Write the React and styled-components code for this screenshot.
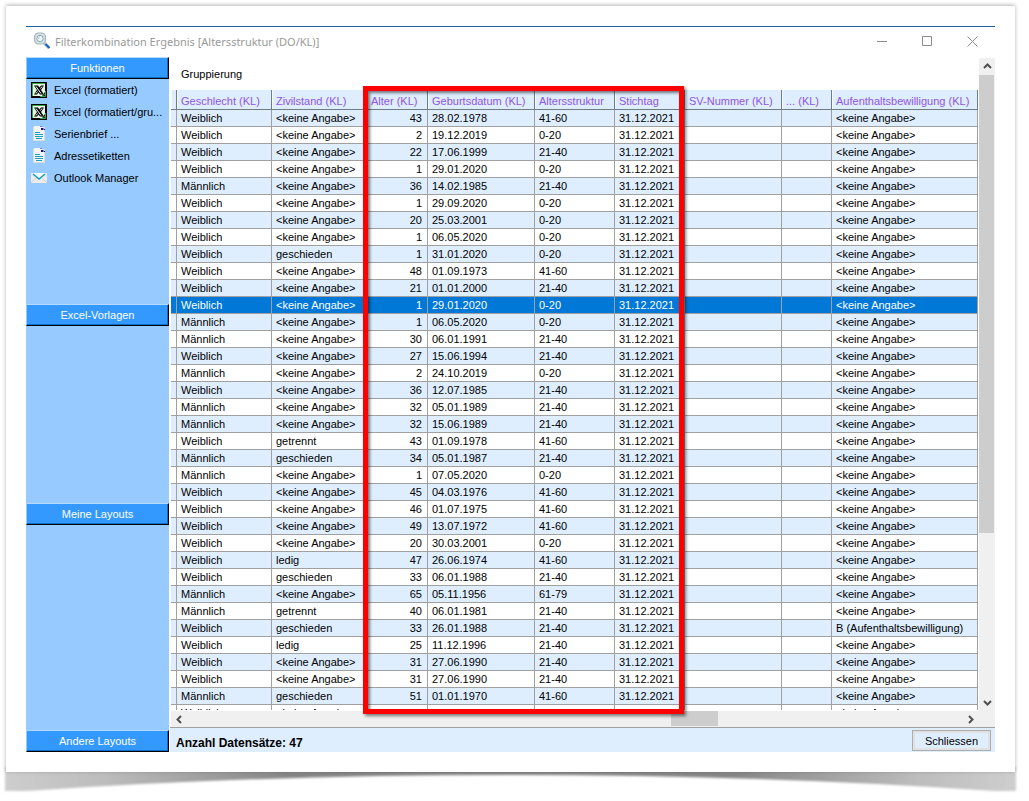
import { useState } from "react";
import styled, { createGlobalStyle } from "styled-components";

const NONE = "<keine Angabe>";
const PERMIT = "B (Aufenthaltsbewilligung)";

const columns = [
  { title: "Geschlecht (KL)", width: 95 },
  { title: "Zivilstand (KL)", width: 95 },
  { title: "Alter (KL)", width: 61 },
  { title: "Geburtsdatum (KL)", width: 107 },
  { title: "Altersstruktur", width: 80 },
  { title: "Stichtag", width: 70 },
  { title: "SV-Nummer (KL)", width: 97 },
  { title: "... (KL)", width: 50 },
  { title: "Aufenthaltsbewilligung (KL)" },
];

//Gender, marital status, age, date of birth, age group, residence permit.
const records = [
  ["Weiblich", NONE, 43, "28.02.1978", "41-60"],
  ["Weiblich", NONE, 2, "19.12.2019", "0-20"],
  ["Weiblich", NONE, 22, "17.06.1999", "21-40"],
  ["Weiblich", NONE, 1, "29.01.2020", "0-20"],
  ["Männlich", NONE, 36, "14.02.1985", "21-40"],
  ["Weiblich", NONE, 1, "29.09.2020", "0-20"],
  ["Weiblich", NONE, 20, "25.03.2001", "0-20"],
  ["Weiblich", NONE, 1, "06.05.2020", "0-20"],
  ["Weiblich", "geschieden", 1, "31.01.2020", "0-20"],
  ["Weiblich", NONE, 48, "01.09.1973", "41-60"],
  ["Weiblich", NONE, 21, "01.01.2000", "21-40"],
  ["Weiblich", NONE, 1, "29.01.2020", "0-20"],
  ["Männlich", NONE, 1, "06.05.2020", "0-20"],
  ["Männlich", NONE, 30, "06.01.1991", "21-40"],
  ["Weiblich", NONE, 27, "15.06.1994", "21-40"],
  ["Männlich", NONE, 2, "24.10.2019", "0-20"],
  ["Weiblich", NONE, 36, "12.07.1985", "21-40"],
  ["Männlich", NONE, 32, "05.01.1989", "21-40"],
  ["Männlich", NONE, 32, "15.06.1989", "21-40"],
  ["Weiblich", "getrennt", 43, "01.09.1978", "41-60"],
  ["Männlich", "geschieden", 34, "05.01.1987", "21-40"],
  ["Männlich", NONE, 1, "07.05.2020", "0-20"],
  ["Weiblich", NONE, 45, "04.03.1976", "41-60"],
  ["Weiblich", NONE, 46, "01.07.1975", "41-60"],
  ["Weiblich", NONE, 49, "13.07.1972", "41-60"],
  ["Weiblich", NONE, 20, "30.03.2001", "0-20"],
  ["Weiblich", "ledig", 47, "26.06.1974", "41-60"],
  ["Weiblich", "geschieden", 33, "06.01.1988", "21-40"],
  ["Männlich", NONE, 65, "05.11.1956", "61-79"],
  ["Männlich", "getrennt", 40, "06.01.1981", "21-40"],
  ["Weiblich", "geschieden", 33, "26.01.1988", "21-40", PERMIT],
  ["Weiblich", "ledig", 25, "11.12.1996", "21-40"],
  ["Weiblich", NONE, 31, "27.06.1990", "21-40"],
  ["Weiblich", NONE, 31, "27.06.1990", "21-40"],
  ["Männlich", "geschieden", 51, "01.01.1970", "41-60"],
  ["Weiblich", NONE, 38, "10.01.1983", "21-40"],
];

const SearchIcon = () => (
  <svg width="18" height="18" viewBox="0 0 18 18" aria-hidden="true">
    <path d="M10.5 10.5l5.500 5.500" stroke="#b5c3cc" strokeWidth="3" />
    <path d="M12.500 12l4 4" stroke="#1f64ad" strokeWidth="2.200" />
    <rect x="1.5" y="1" width="11" height="11" rx="4" fill="#d3e2e6" stroke="#aab6bb" strokeWidth="1.2" />
    <circle cx="7" cy="6.5" r="3.2" fill="#eef5f6" stroke="#8fa9b3" />
    <path d="M5.500 7c0-1 .5-2 1.500-2" stroke="#9cc4d2" fill="none" />
  </svg>
);

const ExcelIcon = () => (
  <svg width="16" height="16" viewBox="0 0 16 16" aria-hidden="true">
    <path fill="#000" d="M0 0h16v16H0z" />
    <path fill="#e8f5e8" d="M2 2h12v8l-3 4H2z" />
    <path fill="none" stroke="#35a83f" d="M1.500 14V1.500H14M14.500 9v5.500H9M11 13.500l3-1" />
    <path fill="#000" d="M3 3.500h4l1.500 2L10 3.500h3L10 8l3 4.500H9L7.500 10.500 6 12.500H3L6 8z" />
    <path fill="none" stroke="#fff" d="M5 4.500l5 7M11 4.500L9.500 6.500M6.500 9.500L5 11.500" />
  </svg>
);

const DocumentIcon = () => (
  <svg width="16" height="16" viewBox="0 0 16 16" aria-hidden="true">
    <path fill="#d5dde3" d="M2 1h12v14H2z" />
    <path fill="#f5f5f4" d="M3 0h7l3 3v11H3z" />
    <path fill="#10109c" d="M9 0l4 4V3l-3-3zM10 0h1v3h3v1h-4z" />
    <path fill="none" stroke="#1ba0c4" d="M4 6.500h5M4 8.500h8M4 10.500h8M5 12.500h6" />
  </svg>
);

const MailIcon = () => (
  <svg width="16" height="16" viewBox="0 0 16 16" aria-hidden="true">
    <path fill="#ececec" d="M0 3h16v10H0z" />
    <path fill="none" stroke="#d3d3d3" d="M0 12.500l5-4M16 12.500l-5-4" />
    <path fill="#fff" d="M2 3h12L8 8z" />
    <path fill="none" stroke="#149cc0" strokeWidth="1.5" d="M2 4l6 5 6-5" />
  </svg>
);

const arrowPaths = {
  up: "M1 6l3.500-3.500L8 6",
  down: "M1 3l3.500 3.500L8 3",
  left: "M6 1L2.500 4.500 6 8",
  right: "M3 1l3.500 3.500L3 8",
};

const Arrow = ({ direction }) => (
  <svg width="9" height="9" viewBox="0 0 9 9" aria-hidden="true">
    <path d={arrowPaths[direction]} fill="none" stroke="#505050" strokeWidth="2" />
  </svg>
);

const functions = [
  { label: "Excel (formatiert)", Icon: ExcelIcon },
  { label: "Excel (formatiert/gru...", Icon: ExcelIcon },
  { label: "Serienbrief ...", Icon: DocumentIcon },
  { label: "Adressetiketten", Icon: DocumentIcon },
  { label: "Outlook Manager", Icon: MailIcon },
];

const PageShadow = () => (
  <ShadowArt viewBox="0 0 1010 40" preserveAspectRatio="none" aria-hidden="true">
    <defs>
      <linearGradient id="curl">
        <stop offset="0" stopColor="#cecece" />
        <stop offset="0.1" stopColor="#bcbcbc" />
        <stop offset="0.28" stopColor="#868686" />
        <stop offset="0.72" stopColor="#868686" />
        <stop offset="0.9" stopColor="#bcbcbc" />
        <stop offset="1" stopColor="#cecece" />
      </linearGradient>
      <filter id="soften" x="-5%" y="-20%" width="110%" height="150%">
        <feGaussianBlur stdDeviation="1.2" />
      </filter>
    </defs>
    <path
      d="M0 6H1010V30H988Q760 14 505 14Q250 14 22 30H0z"
      fill="url(#curl)"
      filter="url(#soften)"
    />
  </ShadowArt>
);

const App = () => {
  const [selected, setSelected] = useState(11);

  return (
    <Page>
      <GlobalStyle />
      <PageShadow />
      <Sheet>
        <Window>
          <TitleBar>
            <SearchIcon />
            <Title>Filterkombination Ergebnis [Altersstruktur (DO/KL)]</Title>
            <WindowButton aria-label="Minimieren">
              <svg width="11" height="11" viewBox="0 0 11 11">
                <path d="M0 5.500h10" stroke="#8c8c8c" />
              </svg>
            </WindowButton>
            <WindowButton aria-label="Maximieren">
              <svg width="11" height="11" viewBox="0 0 11 11">
                <path d="M.5.500h9v9h-9z" fill="none" stroke="#8c8c8c" />
              </svg>
            </WindowButton>
            <WindowButton aria-label="Fenster schliessen">
              <svg width="11" height="11" viewBox="0 0 11 11">
                <path d="M.5.500l10 10M10.500.500l-10 10" stroke="#8c8c8c" />
              </svg>
            </WindowButton>
          </TitleBar>

          <Content>
            <Sidebar>
              <SectionButton>Funktionen</SectionButton>
              <SectionBody $share={225}>
                {functions.map(({ label, Icon }) => (
                  <FunctionButton key={label}>
                    <Icon />
                    {label}
                  </FunctionButton>
                ))}
              </SectionBody>
              <SectionButton>Excel-Vorlagen</SectionButton>
              <SectionBody $share={177} />
              <SectionButton>Meine Layouts</SectionButton>
              <SectionBody $share={205} />
              <SectionButton>Andere Layouts</SectionButton>
            </Sidebar>

            <Main>
              <GridArea>
                <GridColumn>
                  <GroupLabel>Gruppierung</GroupLabel>
                  <TableClip>
                    <Table>
                      <colgroup>
                        <Col $width={6} />
                        {columns.map((column) => (
                          <Col key={column.title} $width={column.width} />
                        ))}
                      </colgroup>
                      <thead>
                        <tr>
                          <HeadCell />
                          {columns.map((column) => (
                            <HeadCell key={column.title} scope="col">
                              {column.title}
                            </HeadCell>
                          ))}
                        </tr>
                      </thead>
                      <tbody>
                        {records.map(([gender, status, age, born, group, permit], i) => (
                          <Row
                            key={i}
                            $selected={i === selected}
                            onClick={() => setSelected(i)}
                          >
                            <Cell />
                            <Cell>{gender}</Cell>
                            <Cell>{status}</Cell>
                            <Cell $right>{age}</Cell>
                            <Cell>{born}</Cell>
                            <Cell>{group}</Cell>
                            <Cell>31.12.2021</Cell>
                            <Cell />
                            <Cell />
                            <Cell>{permit || NONE}</Cell>
                          </Row>
                        ))}
                      </tbody>
                    </Table>
                  </TableClip>
                  <Highlight />
                </GridColumn>
                <VerticalBar>
                  <ScrollButton aria-label="Nach oben">
                    <Arrow direction="up" />
                  </ScrollButton>
                  <VerticalTrack>
                    <VerticalThumb />
                  </VerticalTrack>
                  <ScrollButton aria-label="Nach unten">
                    <Arrow direction="down" />
                  </ScrollButton>
                </VerticalBar>
              </GridArea>
              <HorizontalBar>
                <ScrollButton aria-label="Nach links">
                  <Arrow direction="left" />
                </ScrollButton>
                <HorizontalTrack>
                  <HorizontalThumb />
                </HorizontalTrack>
                <ScrollButton aria-label="Nach rechts">
                  <Arrow direction="right" />
                </ScrollButton>
              </HorizontalBar>
              <Footer>
                <Count>Anzahl Datensätze: 47</Count>
                <CloseButton>Schliessen</CloseButton>
              </Footer>
            </Main>
          </Content>
        </Window>
      </Sheet>
    </Page>
  );
};

const GlobalStyle = createGlobalStyle`
  * {
    box-sizing: border-box;
  }

  body {
    margin: 0;
    background: #fff;
    font-family: "Liberation Sans", Arial, sans-serif;
    font-size: 11px;
    color: #000;
  }

  button {
    padding: 0;
    border: none;
    background: none;
    font: inherit;
    color: inherit;
  }
`;

const Page = styled.div`
  position: relative;
  display: flex;
  height: 100vh;
  min-height: 400px;
  padding: 6px 14px 29px 6px;
`;

const Sheet = styled.div`
  position: relative;
  display: flex;
  flex: 1;
  min-width: 0;
  padding: 20px;
  background: #fff;
  box-shadow: 0 -1px 4px rgba(0, 0, 0, 0.3);
`;

const ShadowArt = styled.svg`
  position: absolute;
  left: 5px;
  bottom: 0;
  width: calc(100% - 18px);
  height: 40px;
  overflow: visible;
`;

const Window = styled.div`
  display: flex;
  flex-direction: column;
  flex: 1;
  min-width: 0;
  border-top: 1px solid #1e6399;
`;

const TitleBar = styled.header`
  display: flex;
  align-items: center;
  height: 30px;
  padding: 0 0 2px 7px;
`;

const Title = styled.h1`
  flex: 1;
  margin: 0;
  padding-left: 4px;
  font-family: "Noto Sans", sans-serif;
  font-size: 11px;
  font-weight: normal;
  color: #999;
`;

const WindowButton = styled.button`
  display: flex;
  align-items: center;
  justify-content: center;
  width: 45px;
  height: 28px;
`;

const Content = styled.div`
  display: flex;
  flex: 1;
  min-height: 0;
`;

const Sidebar = styled.nav`
  display: flex;
  flex-direction: column;
  width: 143px;
  background: #97caff;
`;

const SectionButton = styled.button`
  flex: none;
  height: 22px;
  border: 1px solid;
  border-color: #b5daff #000 #000 #97caff;
  background: #3399ff;
  box-shadow: inset -1px -1px 0 #0f6cc9;
  color: #fff;
`;

const SectionBody = styled.div`
  display: flex;
  flex-direction: column;
  flex: ${({ $share }) => $share} 1 0;
  min-height: 0;
`;

const FunctionButton = styled.button`
  display: flex;
  align-items: center;
  gap: 7px;
  height: 22px;
  padding-left: 5px;
  white-space: nowrap;
`;

const Main = styled.main`
  display: flex;
  flex-direction: column;
  flex: 1;
  min-width: 0;
  padding-left: 2px;
`;

const GridArea = styled.div`
  display: flex;
  flex: 1;
  min-height: 0;
  padding-top: 1px;
`;

const GridColumn = styled.div`
  position: relative;
  display: flex;
  flex-direction: column;
  flex: 1;
  min-width: 0;
  padding-right: 1px;
`;

const GroupLabel = styled.div`
  height: 32px;
  padding-left: 10px;
  line-height: 32px;
`;

const TableClip = styled.div`
  flex: 1;
  min-height: 0;
  margin-bottom: 1px;
  overflow: hidden;
`;

const Table = styled.table`
  width: 100%;
  table-layout: fixed;
  border-collapse: separate;
  border-spacing: 0;
`;

const Col = styled.col`
  width: ${({ $width }) => ($width ? `${$width}px` : "auto")};
`;

const HeadCell = styled.th`
  height: 20px;
  padding: 2px 0 0 4px;
  border-right: 1px solid #6f7b85;
  border-bottom: 1px solid #6f7b85;
  background: #deeeff;
  box-shadow: inset 1px 0 0 #f4faff;
  font-weight: normal;
  text-align: left;
  white-space: nowrap;
  color: #9154e0;

  &:first-child {
    padding: 0;
  }
`;

const Cell = styled.td`
  height: 17px;
  padding: 0 5px 0 4px;
  border-right: 1px solid #a0a0a0;
  border-bottom: 1px solid #a0a0a0;
  line-height: 16px;
  text-align: ${({ $right }) => ($right ? "right" : "left")};
  white-space: nowrap;

  &:first-child {
    padding: 0;
  }
`;

const Row = styled.tr`
  background: ${({ $selected }) => ($selected ? "#0078d7" : "#fff")};
  color: ${({ $selected }) => ($selected ? "#fff" : "#000")};

  &:nth-child(odd) {
    background: ${({ $selected }) => ($selected ? "#0078d7" : "#deeeff")};
  }
`;

//Red frame marking the age columns.
const Highlight = styled.div`
  position: absolute;
  top: 28px;
  bottom: -3px;
  left: 192px;
  width: 321px;
  border: 5px solid #fe0000;
  box-shadow: 2px 2px 3px rgba(0, 0, 0, 0.5), inset 2px 2px 3px rgba(0, 0, 0, 0.5);
  pointer-events: none;
`;

const VerticalBar = styled.div`
  display: flex;
  flex-direction: column;
  width: 16px;
  background: #f0f0f0;
`;

const VerticalTrack = styled.div`
  flex: 1;
`;

const VerticalThumb = styled.div`
  width: 15px;
  height: 74%;
  background: #cdcdcd;
`;

const HorizontalBar = styled.div`
  display: flex;
  height: 16px;
  padding-right: 17px;
  background: #f0f0f0;
`;

const HorizontalTrack = styled.div`
  flex: 1;
  padding-left: 60%;
`;

const HorizontalThumb = styled.div`
  width: 16%;
  height: 15px;
  background: #cdcdcd;
`;

const ScrollButton = styled.button`
  display: flex;
  flex: none;
  align-items: center;
  justify-content: center;
  width: 16px;
  height: 17px;
`;

const Footer = styled.footer`
  display: flex;
  align-items: center;
  justify-content: space-between;
  height: 25px;
  margin-left: -1px;
  padding: 1px 4px 0 6px;
  border-top: 1px solid #a0a0a0;
  background: #deeeff;
`;

const Count = styled.span`
  padding-top: 4px;
  font-size: 12px;
  font-weight: bold;
`;

const CloseButton = styled.button`
  width: 79px;
  height: 21px;
  border: 1px solid #adadad;
  background: #deeeff;
  box-shadow: inset 0 0 0 2px #e1e1e1;
`;

export default App;
